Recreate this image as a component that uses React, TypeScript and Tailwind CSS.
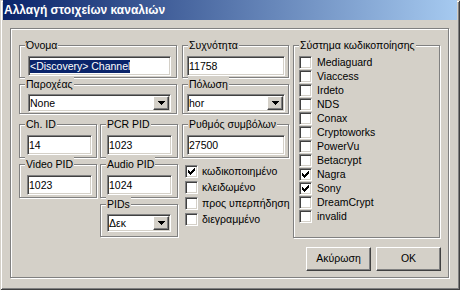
import React from "react";

const sunken =
  "border border-t-[#808080] border-l-[#808080] border-b-white border-r-white shadow-[inset_1px_1px_0_#404040,inset_-1px_-1px_0_#d4d0c8] bg-white";
const raised =
  "border border-t-white border-l-white border-b-[#404040] border-r-[#404040] shadow-[inset_-1px_-1px_0_#808080] bg-[#d4d0c8]";
const etched =
  "border border-[#808080] shadow-[inset_1px_1px_0_#fff,1px_1px_0_#fff]";

function Group({
  label,
  className,
  children,
}: {
  label: string;
  className: string;
  children?: React.ReactNode;
}) {
  return (
    <div className={`relative ${etched} ${className}`}>
      <span className="absolute left-[5px] top-[-8px] bg-[#d4d0c8] px-[1px] leading-[14px] whitespace-nowrap">
        {label}
      </span>
      {children}
    </div>
  );
}

function Input({ className, children }: { className: string; children?: React.ReactNode }) {
  return (
    <div className={`${sunken} ${className} h-[20px] flex items-center pl-[1px] leading-[13px] whitespace-nowrap overflow-hidden`}>
      {children}
    </div>
  );
}

function Arrow() {
  return (
    <svg width="7" height="4" viewBox="0 0 7 4" shapeRendering="crispEdges">
      <rect x="0" y="0" width="7" height="1" fill="#000" />
      <rect x="1" y="1" width="5" height="1" fill="#000" />
      <rect x="2" y="2" width="3" height="1" fill="#000" />
      <rect x="3" y="3" width="1" height="1" fill="#000" />
    </svg>
  );
}

function Combo({ className, value }: { className: string; value: string }) {
  return (
    <div className={`${sunken} ${className} h-[18px] flex items-stretch p-[1px]`}>
      <div className="flex-1 flex items-center pl-[0px] leading-[13px]">{value}</div>
      <div className={`${raised} w-[16px] flex items-center justify-center`}>
        <Arrow />
      </div>
    </div>
  );
}

function Check() {
  const rows: [number, number, number][] = [
    [0, 6, 1],
    [1, 5, 2],
    [2, 0, 1],
    [2, 4, 3],
    [3, 0, 2],
    [3, 3, 3],
    [4, 0, 5],
    [5, 1, 3],
    [6, 2, 1],
  ];
  return (
    <svg width="9" height="9" viewBox="0 0 9 9" shapeRendering="crispEdges">
      {rows.map(([y, x, w], i) => (
        <rect key={i} x={x + 1} y={y + 1} width={w} height="1" fill="#000" />
      ))}
    </svg>
  );
}

function CheckRow({ label, checked, gap }: { label: string; checked?: boolean; gap: string }) {
  return (
    <div className={`flex items-center h-[13px] ${gap} whitespace-nowrap`}>
      <div className={`${sunken} w-[13px] h-[13px] flex items-center justify-center shrink-0`}>
        {checked ? <Check /> : null}
      </div>
      <span className="leading-[13px]">{label}</span>
    </div>
  );
}

export default function App() {
  const systems: [string, boolean][] = [
    ["Mediaguard", false],
    ["Viaccess", false],
    ["Irdeto", false],
    ["NDS", false],
    ["Conax", false],
    ["Cryptoworks", false],
    ["PowerVu", false],
    ["Betacrypt", false],
    ["Nagra", true],
    ["Sony", true],
    ["DreamCrypt", false],
    ["invalid", false],
  ];
  return (
    <div className="w-[460px] h-[290px] bg-[#d4d0c8] shadow-[inset_1px_1px_0_#d4d0c8,inset_-1px_-1px_0_#404040,inset_2px_2px_0_#fff,inset_-2px_-2px_0_#808080] flex flex-col font-['Liberation_Sans',Arial,sans-serif] text-[10.5px] text-black overflow-hidden">
      <div className="mx-[3px] h-[20px] shrink-0 bg-[linear-gradient(to_right,#0a246a,#a6caf0)] flex items-center pl-[1px] text-white font-bold text-[12px] leading-[14px]">
        Αλλαγή στοιχείων καναλιών
      </div>
      <div className={`ml-[10px] mt-[8px] w-[439px] h-[250px] ${etched} pl-[8px] pt-[16px] flex gap-[4px]`}>
        {/* left column */}
        <div className="w-[270px] flex flex-col">
          <div className="flex gap-[5px]">
            <Group label="Όνομα" className="w-[158px] h-[33px] pt-[10px] pl-[8px]">
              <Input className="w-[143px]">
                <span className="bg-[#0a246a] text-white">{"<Discovery> Channel"}</span>
              </Input>
            </Group>
            <Group label="Συχνότητα" className="w-[107px] h-[33px] pt-[10px] pl-[4px]">
              <Input className="w-[98px]">11758</Input>
            </Group>
          </div>
          <div className="flex gap-[5px] mt-[6px]">
            <Group label="Παροχέας" className="w-[158px] h-[30px] pt-[9px] pl-[8px]">
              <Combo className="w-[143px]" value="None" />
            </Group>
            <Group label="Πόλωση" className="w-[107px] h-[30px] pt-[9px] pl-[4px]">
              <Combo className="w-[98px]" value="hor" />
            </Group>
          </div>
          <div className="flex mt-[10px]">
            <Group label="Ch. ID" className="w-[78px] h-[34px] pt-[10px] pl-[7px]">
              <Input className="w-[65px]">14</Input>
            </Group>
            <Group label="PCR PID" className="ml-[3px] w-[78px] h-[34px] pt-[10px] pl-[6px]">
              <Input className="w-[65px]">1023</Input>
            </Group>
            <Group label="Ρυθμός συμβόλων" className="ml-[4px] w-[107px] h-[34px] pt-[10px] pl-[4px]">
              <Input className="w-[98px]">27500</Input>
            </Group>
          </div>
          <div className="flex mt-[6px]">
            <div className="w-[78px]">
              <Group label="Video PID" className="w-[78px] h-[34px] pt-[10px] pl-[7px]">
                <Input className="w-[65px]">1023</Input>
              </Group>
            </div>
            <div className="ml-[3px] w-[78px] flex flex-col">
              <Group label="Audio PID" className="w-[78px] h-[34px] pt-[10px] pl-[6px]">
                <Input className="w-[65px]">1024</Input>
              </Group>
              <Group label="PIDs" className="mt-[6px] w-[78px] h-[33px] pt-[9px] pl-[6px]">
                <Combo className="w-[64px]" value="Δεκ" />
              </Group>
            </div>
            <div className="ml-[4px] pl-[3px] pt-[1px] flex flex-col gap-[3px]">
              <CheckRow label="κωδικοποιημένο" checked gap="gap-[4px]" />
              <CheckRow label="κλειδωμένο" gap="gap-[4px]" />
              <CheckRow label="προς υπερπήδηση" gap="gap-[4px]" />
              <CheckRow label="διεγραμμένο" gap="gap-[4px]" />
            </div>
          </div>
        </div>
        {/* right column */}
        <div className="w-[148px] flex flex-col">
          <Group label="Σύστημα κωδικοποίησης" className="w-[147px] h-[193px] pt-[10px] pl-[5px] flex flex-col gap-[1px]">
            {systems.map(([n, c]) => (
              <CheckRow key={n} label={n} checked={c} gap="gap-[5px]" />
            ))}
          </Group>
          <div className="mt-[9px] flex justify-end gap-[5px]">
            <div className={`${raised} w-[65px] h-[24px] flex items-center justify-center`}>Ακύρωση</div>
            <div className={`${raised} w-[65px] h-[24px] flex items-center justify-center`}>OK</div>
          </div>
        </div>
      </div>
    </div>
  );
}
